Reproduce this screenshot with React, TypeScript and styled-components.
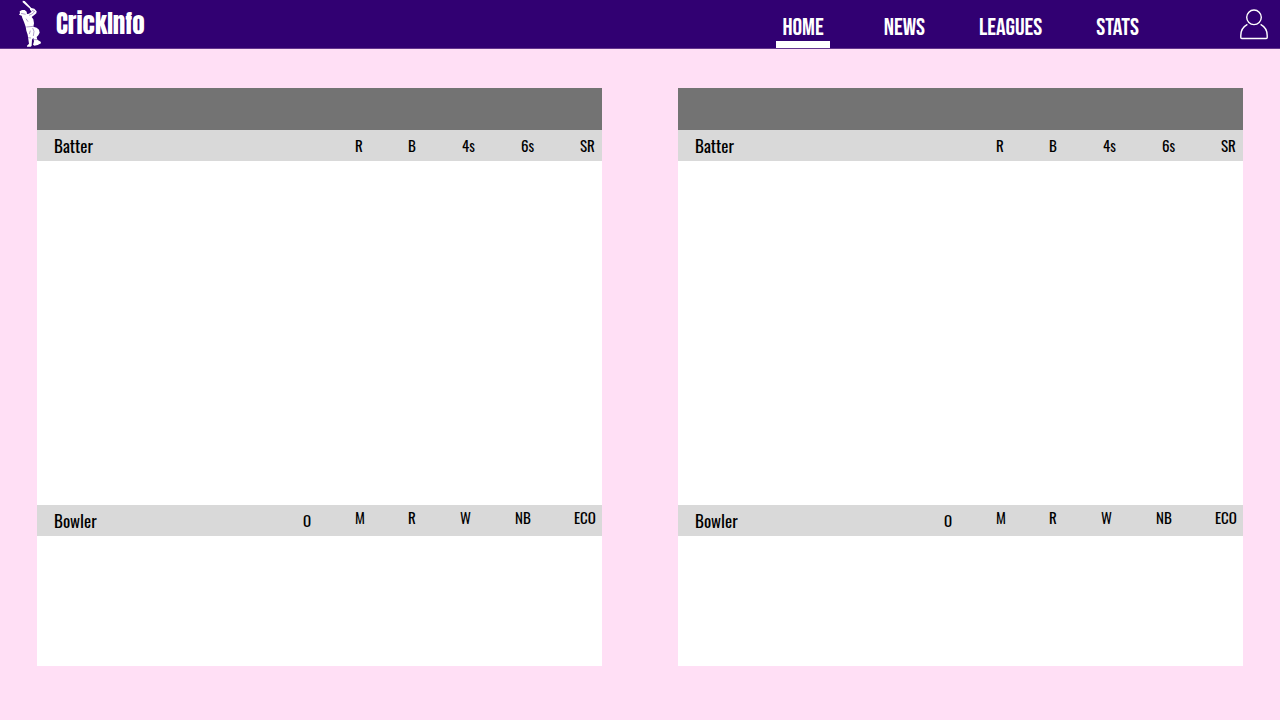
import React from "react";
import styled, { createGlobalStyle } from "styled-components";

const GlobalStyle = createGlobalStyle`
  *, *::before, *::after { box-sizing: border-box; }
  body {
    margin: 0;
    background: #ffdff5;
    color: #000;
    font-family: Oswald, "Liberation Sans Narrow", "Liberation Sans", sans-serif;
  }
`;

const Header = styled.header`
  display: flex;
  align-items: center;
  height: 49px;
  padding: 0 12px 0 18px;
  background: #310072;
  border-bottom: 1px solid #64368e;
  color: #fff;
`;

const Brand = styled.a`
  display: flex;
  align-items: center;
  gap: 12px;
  height: 48px;
  color: inherit;
  text-decoration: none;
`;

const BrandName = styled.span`
  font-family: Anton, "Liberation Sans Narrow", "Liberation Sans", sans-serif;
  font-size: 25px;
  line-height: 30px;
`;

const Nav = styled.nav`
  display: flex;
  gap: 42px;
  height: 48px;
  margin-left: auto;
`;

const NavLink = styled.a<{ $active?: boolean }>`
  margin-right: ${(p) => (p.$active ? 6 : 0)}px;
  padding: 15px 6px 0;
  border-bottom: 7px solid ${(p) => (p.$active ? "#fff" : "transparent")};
  color: inherit;
  font-family: "Bebas Neue", "Liberation Sans Narrow", "Liberation Sans", sans-serif;
  font-size: 24px;
  line-height: 26px;
  text-decoration: none;
`;

const AccountButton = styled.button`
  display: flex;
  margin-left: 95px;
  padding: 0;
  border: 0;
  background: none;
  color: inherit;
  cursor: pointer;
`;

const Boards = styled.main`
  display: grid;
  grid-template-columns: 1fr 1fr;
  gap: 76px;
  padding: 39px 37px;
`;

const Board = styled.section`
  background: #fff;
`;

const TeamBar = styled.header`
  height: 42px;
  background: #737373;
`;

const Innings = styled.div<{ $height: number }>`
  min-height: ${(p) => p.$height}px;
`;

const Table = styled.table`
  width: 100%;
  table-layout: fixed;
  border-collapse: collapse;
  background: #d9d9d9;
`;

const NameHead = styled.th`
  height: 31px;
  padding: 0 0 0 17px;
  font-size: 17px;
  line-height: 24px;
  font-weight: 400;
  text-align: left;
`;

const StatHead = styled.th<{ $width: number; $raised?: boolean }>`
  width: ${(p) => p.$width}px;
  padding: 0 0 ${(p) => (p.$raised ? 7 : 2)}px;
  font-size: 15px;
  line-height: 24px;
  font-weight: 400;
  text-align: left;
`;

type Column = { label: string; width: number; raised?: boolean };

const batting: Column[] = [
  { label: "R", width: 53 },
  { label: "B", width: 54 },
  { label: "4s", width: 59 },
  { label: "6s", width: 59 },
  { label: "SR", width: 22 },
];

const bowling: Column[] = [
  { label: "O", width: 52 },
  { label: "M", width: 53, raised: true },
  { label: "R", width: 52, raised: true },
  { label: "W", width: 55, raised: true },
  { label: "NB", width: 59, raised: true },
  { label: "ECO", width: 28, raised: true },
];

function StatTable({ name, columns }: { name: string; columns: Column[] }) {
  return (
    <Table>
      <thead>
        <tr>
          <NameHead scope="col">{name}</NameHead>
          {columns.map((c) => (
            <StatHead key={c.label} scope="col" $width={c.width} $raised={c.raised}>
              {c.label}
            </StatHead>
          ))}
        </tr>
      </thead>
    </Table>
  );
}

function ScoreBoard({ label }: { label: string }) {
  return (
    <Board aria-label={label}>
      <TeamBar />
      <Innings $height={375}>
        <StatTable name="Batter" columns={batting} />
      </Innings>
      <Innings $height={161}>
        <StatTable name="Bowler" columns={bowling} />
      </Innings>
    </Board>
  );
}

function BatsmanLogo() {
  return (
    <svg width="26" height="48" viewBox="0 0 78 144" aria-hidden="true">
      <path
        fill="#fff"
        d="M14 2L20 3 40 24 49 26 56 34 55 40 48 46 41 51 46 58 48 70 46 80 56 83 63 89 65 98 61 106 56 111 58 119 68 125 69 130 59 135 49 137 45 134 48 124 46 113 42 119 41 137 38 140 27 140 27 137 33 131 31 118 29 104 25 92 23 80 18 66 13 54 11 47 3 44 6 40 5 34 12 30 20 30 26 35 27 42 33 41 41 35 36 29 36 26 14 7z"
      />
      <path
        fill="none"
        stroke="#8a70af"
        strokeWidth="2"
        d="M9 40l14 3M33 46l9-4 7-6M25 81l21-2M44 84l4 10-2 14M34 102l3-10M30 113l9 1M48 119l9 0M42 31l9 4M24 56l6 9"
      />
    </svg>
  );
}

function UserIcon() {
  return (
    <svg
      width="28"
      height="32"
      viewBox="0 0 28 32"
      fill="none"
      stroke="currentColor"
      strokeWidth="1.4"
      aria-hidden="true"
    >
      <circle cx="14" cy="9.3" r="7.3" />
      <path d="M7.4 16.4C3 18.8.8 22.8.8 27.4v2.1q0 1 1 1h24.4q1 0 1-1v-2.1c0-4.6-2.2-8.6-6.6-11" />
    </svg>
  );
}

const links = ["HOME", "NEWS", "LEAGUES", "STATS"];

export default function App() {
  return (
    <>
      <GlobalStyle />
      <Header>
        <Brand href="#home">
          <BatsmanLogo />
          <BrandName>CrickInfo</BrandName>
        </Brand>
        <Nav aria-label="Main">
          {links.map((l) => (
            <NavLink
              key={l}
              href={`#${l.toLowerCase()}`}
              $active={l === "HOME"}
              aria-current={l === "HOME" ? "page" : undefined}
            >
              {l}
            </NavLink>
          ))}
        </Nav>
        <AccountButton type="button" aria-label="Account">
          <UserIcon />
        </AccountButton>
      </Header>
      <Boards>
        <ScoreBoard label="First innings" />
        <ScoreBoard label="Second innings" />
      </Boards>
    </>
  );
}
